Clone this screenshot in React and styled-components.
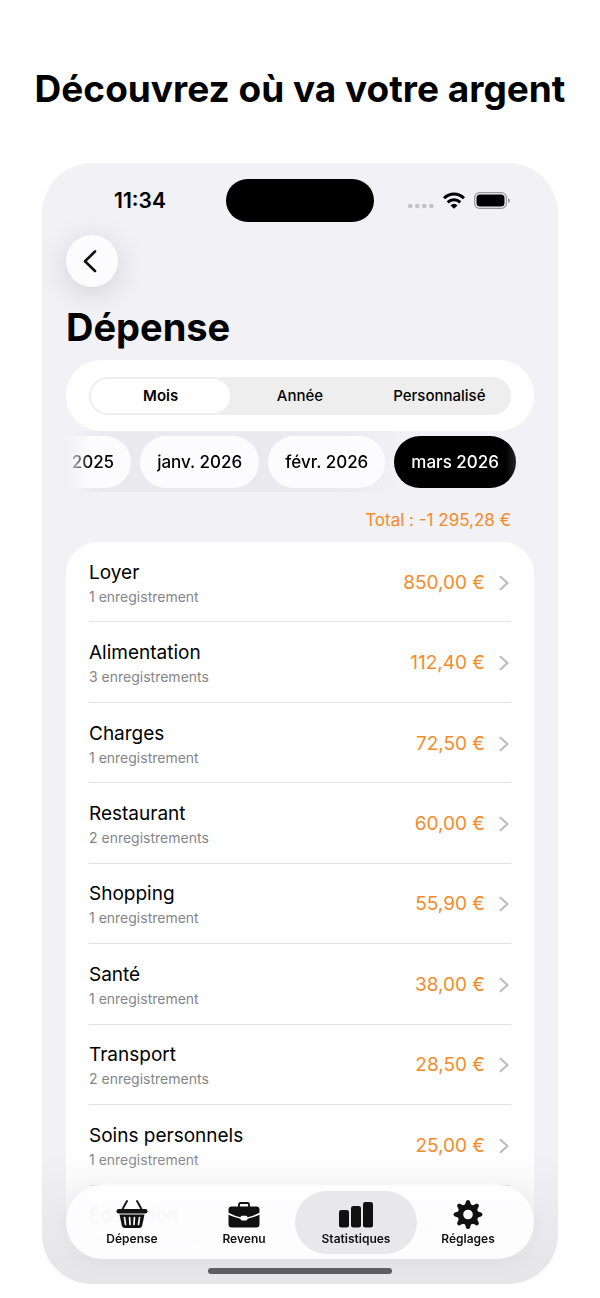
import React, { useState } from 'react';
import styled, { createGlobalStyle } from 'styled-components';

const GlobalStyle = createGlobalStyle`
    * {
        box-sizing: border-box;
    }

    body {
        margin: 0;
        background-color: #fff;
        color: #000;
        font-family: Inter, "Liberation Sans", sans-serif;
    }

    button {
        font-family: inherit;
        color: inherit;
        border: none;
        cursor: pointer;
    }
`;

const Page = styled.div`
    padding: 64px 42px 14px;
`;

const Headline = styled.h1`
    margin: 0 -30px 49px;
    font-size: 37px;
    line-height: 50px;
    font-weight: 700;
    text-align: center;
    white-space: nowrap;
`;

const Phone = styled.main`
    position: relative;
    overflow: hidden;
    padding: 16px 24px 18px;
    border-radius: 50px;
    background-color: #f1f1f6;
`;

const StatusBar = styled.div`
    display: grid;
    grid-template-columns: 1fr 148px 1fr;
    align-items: center;
    height: 43px;
`;

const Time = styled.div`
    padding-right: 12px;
    font-size: 21px;
    line-height: 24px;
    font-weight: 600;
    text-align: center;
`;

const Island = styled.div`
    height: 43px;
    border-radius: 22px;
    background-color: #000;
`;

const StatusIcons = styled.div`
    display: flex;
    align-items: center;
    justify-content: flex-end;
    gap: 9px;
    padding-right: 24px;
`;

const BackButton = styled.button`
    display: flex;
    align-items: center;
    justify-content: center;
    width: 52px;
    height: 52px;
    margin: 13px 0 16px;
    padding: 0;
    border-radius: 50%;
    background-color: #fcfcff;
    box-shadow: 0 6px 30px rgba(0, 0, 0, 0.14);
`;

const Title = styled.h2`
    margin: 0 0 9px;
    font-size: 38px;
    line-height: 48px;
    font-weight: 700;
`;

const PeriodCard = styled.div`
    padding: 17px 23px 16px;
    border-radius: 35px;
    background-color: #fff;
`;

const Segments = styled.div`
    display: grid;
    grid-template-columns: repeat(3, 1fr);
    padding: 2px;
    border-radius: 19px;
    background-color: #eee;
`;

const Segment = styled.button`
    height: 34px;
    padding: 0;
    border-radius: 17px;
    background-color: ${props => (props.$active ? '#fff' : 'transparent')};
    font-size: 15px;
    line-height: 20px;
    font-weight: ${props => (props.$active ? 600 : 500)};
`;

const Months = styled.div`
    display: flex;
    justify-content: flex-end;
    gap: 9px;
    overflow: hidden;
    margin-right: 18px;
    padding: 5px 0 4px;
    background: linear-gradient(90deg, #f1f1f6 0, #e9e9ee 40px, #e9e9ee 60%, #f1f1f6 74%);
    mask-image: linear-gradient(90deg, transparent 0, #000 24px, #000 calc(100% - 10px), rgba(0, 0, 0, 0.85));
`;

const Month = styled.button`
    flex: none;
    height: 52px;
    padding: 0 17px;
    border-radius: 26px;
    background-color: ${props => (props.$active ? '#000' : '#fcfcff')};
    color: ${props => (props.$active ? '#fff' : '#000')};
    font-size: 17px;
    line-height: 24px;
    font-weight: 500;
    white-space: nowrap;
`;

const Total = styled.p`
    margin: 16px 23px 10px 0;
    font-size: 17px;
    line-height: 24px;
    text-align: right;
    color: #f58b2a;
`;

const List = styled.ul`
    display: grid;
    grid-auto-rows: 1fr;
    min-height: 724px;
    margin: 0;
    padding: 0 23px;
    border-radius: 32px;
    background-color: #fff;
    list-style: none;
`;

const Item = styled.li`
    display: flex;
    border-bottom: 1px solid #e3e3e5;
`;

const RowButton = styled.button`
    display: flex;
    flex: 1;
    align-items: center;
    padding: 2px 0 0;
    background: none;
    text-align: left;
`;

const Category = styled.span`
    flex: 1;
    padding-top: 2px;
    font-size: 19px;
    line-height: 26px;
`;

const Count = styled.small`
    display: block;
    font-size: 14px;
    line-height: 22px;
    color: #858589;
`;

const Amount = styled.span`
    margin-right: 14px;
    font-size: 19px;
    line-height: 26px;
    color: #f58b2a;
`;

const BottomFade = styled.div`
    position: absolute;
    inset: auto 0 0;
    height: 130px;
    background: linear-gradient(rgba(228, 228, 231, 0), rgba(228, 228, 231, 0.3) 25%, rgba(231, 231, 234, 1) 80%);
    pointer-events: none;
`;

const TabBar = styled.nav`
    position: absolute;
    inset: auto 24px 25px;
    display: grid;
    grid-template-columns: repeat(4, 1fr);
    padding: 6px 10px 5px;
    border-radius: 37px;
    background-color: rgba(254, 254, 255, 0.92);
    backdrop-filter: blur(1px);
    box-shadow: 0 4px 20px rgba(0, 0, 0, 0.04);
`;

const Tab = styled.button`
    display: flex;
    flex-direction: column;
    align-items: center;
    gap: 1px;
    height: 63px;
    margin: 0 -5px;
    padding: 8px 0 0;
    border-radius: 32px;
    background-color: ${props => (props.$active ? '#e8e8ea' : 'transparent')};
    color: #111;
    font-size: 12px;
    line-height: 18px;
    font-weight: 600;
`;

const HomeIndicator = styled.div`
    position: absolute;
    left: 50%;
    bottom: 10px;
    width: 184px;
    height: 6px;
    border-radius: 3px;
    background-color: #5f5f61;
    transform: translateX(-50%);
`;

const Signal = () => (
    <svg width="26" height="16" viewBox="0 0 26 16" fill="#c3c3c8">
        <circle cx="2.3" cy="13" r="2.3" />
        <circle cx="9.3" cy="13" r="2.3" />
        <circle cx="16.3" cy="13" r="2.3" />
        <circle cx="23.4" cy="13" r="2.3" />
    </svg>
);

const Wifi = () => (
    <svg width="22" height="17" viewBox="0 0 22 17" fill="none" stroke="#000" strokeWidth="3">
        <path d="M1 6.3C6.700.6 15.300.6 21 6.300" />
        <path d="M4.700 10.300C8.300 6.800 13.700 6.800 17.300 10.300" />
        <path d="M11 16.800 7.500 13.400Q11 10.200 14.500 13.400Z" fill="#000" stroke="none" />
    </svg>
);

const Battery = () => (
    <svg width="36" height="17" viewBox="0 0 36 17">
        <rect x=".6" y=".6" width="31.800" height="15.800" rx="5" fill="none" stroke="#98989c" strokeWidth="1.200" />
        <rect x="2.500" y="2.500" width="28" height="12" rx="3.500" />
        <path d="M34 6v5q2-.8 2-2.500T34 6" fill="#98989c" />
    </svg>
);

const Chevron = () => (
    <svg width="12" height="18" viewBox="0 0 12 18" fill="none" stroke="#bdbdc1" strokeWidth="2.200" strokeLinecap="round" strokeLinejoin="round">
        <path d="M1.500 2.800 8.500 9l-7 6.200" />
    </svg>
);

const BackIcon = () => (
    <svg width="24" height="24" viewBox="0 0 24 24" fill="none" stroke="#111" strokeWidth="2.600" strokeLinecap="round" strokeLinejoin="round">
        <path d="M15 2.500 5 12.300l10 9.700" />
    </svg>
);

const BasketIcon = () => (
    <svg width="34" height="30" viewBox="0 0 34 30">
        <path d="m7 11 5-9M27 11l-5-9" fill="none" stroke="#111" strokeWidth="1.900" strokeLinecap="round" />
        <rect x="1.500" y="10" width="31" height="4.500" rx="2.200" fill="#111" />
        <path d="M4.500 15.500h25l-2.300 11q-.6 2.500-3 2.500H9.800q-2.400 0-3-2.500Z" fill="#111" />
        <path d="m9.500 18.500 1 7M14.600 18.500l.4 7M19.400 18.500l-.4 7M24.500 18.500l-1 7" stroke="#fdfdff" strokeWidth="1.700" strokeLinecap="round" />
    </svg>
);

const BriefcaseIcon = () => (
    <svg width="34" height="30" viewBox="0 0 34 30" fill="#111">
        <path d="M12 8V5.500Q12 4 13.500 4h7Q22 4 22 5.500V8" fill="none" stroke="#111" strokeWidth="1.800" />
        <path d="M4.500 7.500h25q3 0 3 3v3.300Q26 17.300 20.500 18.200q-.3-1.400-1.500-1.400h-4q-1.200 0-1.500 1.400Q8 17.300 1.500 13.800v-3.300q0-3 3-3Z" />
        <path d="M1.500 15.800q6.500 3 12 3.900v.4q0 1.400 1.500 1.400h4q1.500 0 1.500-1.400v-.4q5.500-.9 12-3.900v9.700q0 3-3 3h-25q-3 0-3-3Z" />
    </svg>
);

const BarsIcon = () => (
    <svg width="34" height="30" viewBox="0 0 34 30" fill="#111">
        <rect x="0" y="11" width="10" height="17.500" rx="2.300" />
        <rect x="12" y="7" width="10" height="21.500" rx="2.300" />
        <rect x="24" y="3" width="10" height="25.500" rx="2.300" />
    </svg>
);

const GearIcon = () => (
    <svg width="34" height="30" viewBox="0 0 34 30" fill="#111">
        {[0, 45, 90, 135].map(angle => (
            <path key={angle} d="M15 2.500Q15.300 1 17 1t2 1.500L20.500 7v17L19 28.500Q18.700 30 17 30t-2-1.500L13.500 24V7Z" transform={`rotate(${angle} 17 15.500)`} />
        ))}
        <circle cx="17" cy="15.500" r="10.500" />
        <circle cx="17" cy="15.500" r="4.800" fill="#fdfdff" />
    </svg>
);

const periods = ['Mois', 'Année', 'Personnalisé'];

const months = ['déc. 2025', 'janv. 2026', 'févr. 2026', 'mars 2026'];

const expenses = [
    { name: 'Loyer', count: 1, amount: '850,00 €' },
    { name: 'Alimentation', count: 3, amount: '112,40 €' },
    { name: 'Charges', count: 1, amount: '72,50 €' },
    { name: 'Restaurant', count: 2, amount: '60,00 €' },
    { name: 'Shopping', count: 1, amount: '55,90 €' },
    { name: 'Santé', count: 1, amount: '38,00 €' },
    { name: 'Transport', count: 2, amount: '28,50 €' },
    { name: 'Soins personnels', count: 1, amount: '25,00 €' },
    { name: 'Éducation', count: 1, amount: '20,00 €' },
];

const tabs = [
    { label: 'Dépense', Icon: BasketIcon },
    { label: 'Revenu', Icon: BriefcaseIcon },
    { label: 'Statistiques', Icon: BarsIcon },
    { label: 'Réglages', Icon: GearIcon },
];

function App() {
    const [period, setPeriod] = useState('Mois');
    const [month, setMonth] = useState('mars 2026');
    const [tab, setTab] = useState('Statistiques');

    return (
        <Page>
            <GlobalStyle />
            <Headline>Découvrez où va votre argent</Headline>
            <Phone>
                <StatusBar>
                    <Time>11:34</Time>
                    <Island />
                    <StatusIcons>
                        <Signal />
                        <Wifi />
                        <Battery />
                    </StatusIcons>
                </StatusBar>
                <BackButton aria-label="Retour">
                    <BackIcon />
                </BackButton>
                <Title>Dépense</Title>
                <PeriodCard>
                    <Segments>
                        {periods.map(name => (
                            <Segment key={name} $active={name === period} onClick={() => setPeriod(name)}>
                                {name}
                            </Segment>
                        ))}
                    </Segments>
                </PeriodCard>
                <Months>
                    {months.map(name => (
                        <Month key={name} $active={name === month} onClick={() => setMonth(name)}>
                            {name}
                        </Month>
                    ))}
                </Months>
                <Total>Total : -1 295,28 €</Total>
                <List>
                    {expenses.map(({ name, count, amount }) => (
                        <Item key={name}>
                            <RowButton>
                                <Category>
                                    {name}
                                    <Count>{count} enregistrement{count > 1 ? 's' : ''}</Count>
                                </Category>
                                <Amount>{amount}</Amount>
                                <Chevron />
                            </RowButton>
                        </Item>
                    ))}
                </List>
                <BottomFade />
                <TabBar>
                    {tabs.map(({ label, Icon }) => (
                        <Tab key={label} $active={label === tab} onClick={() => setTab(label)}>
                            <Icon />
                            {label}
                        </Tab>
                    ))}
                </TabBar>
                <HomeIndicator />
            </Phone>
        </Page>
    );
}

export default App;
